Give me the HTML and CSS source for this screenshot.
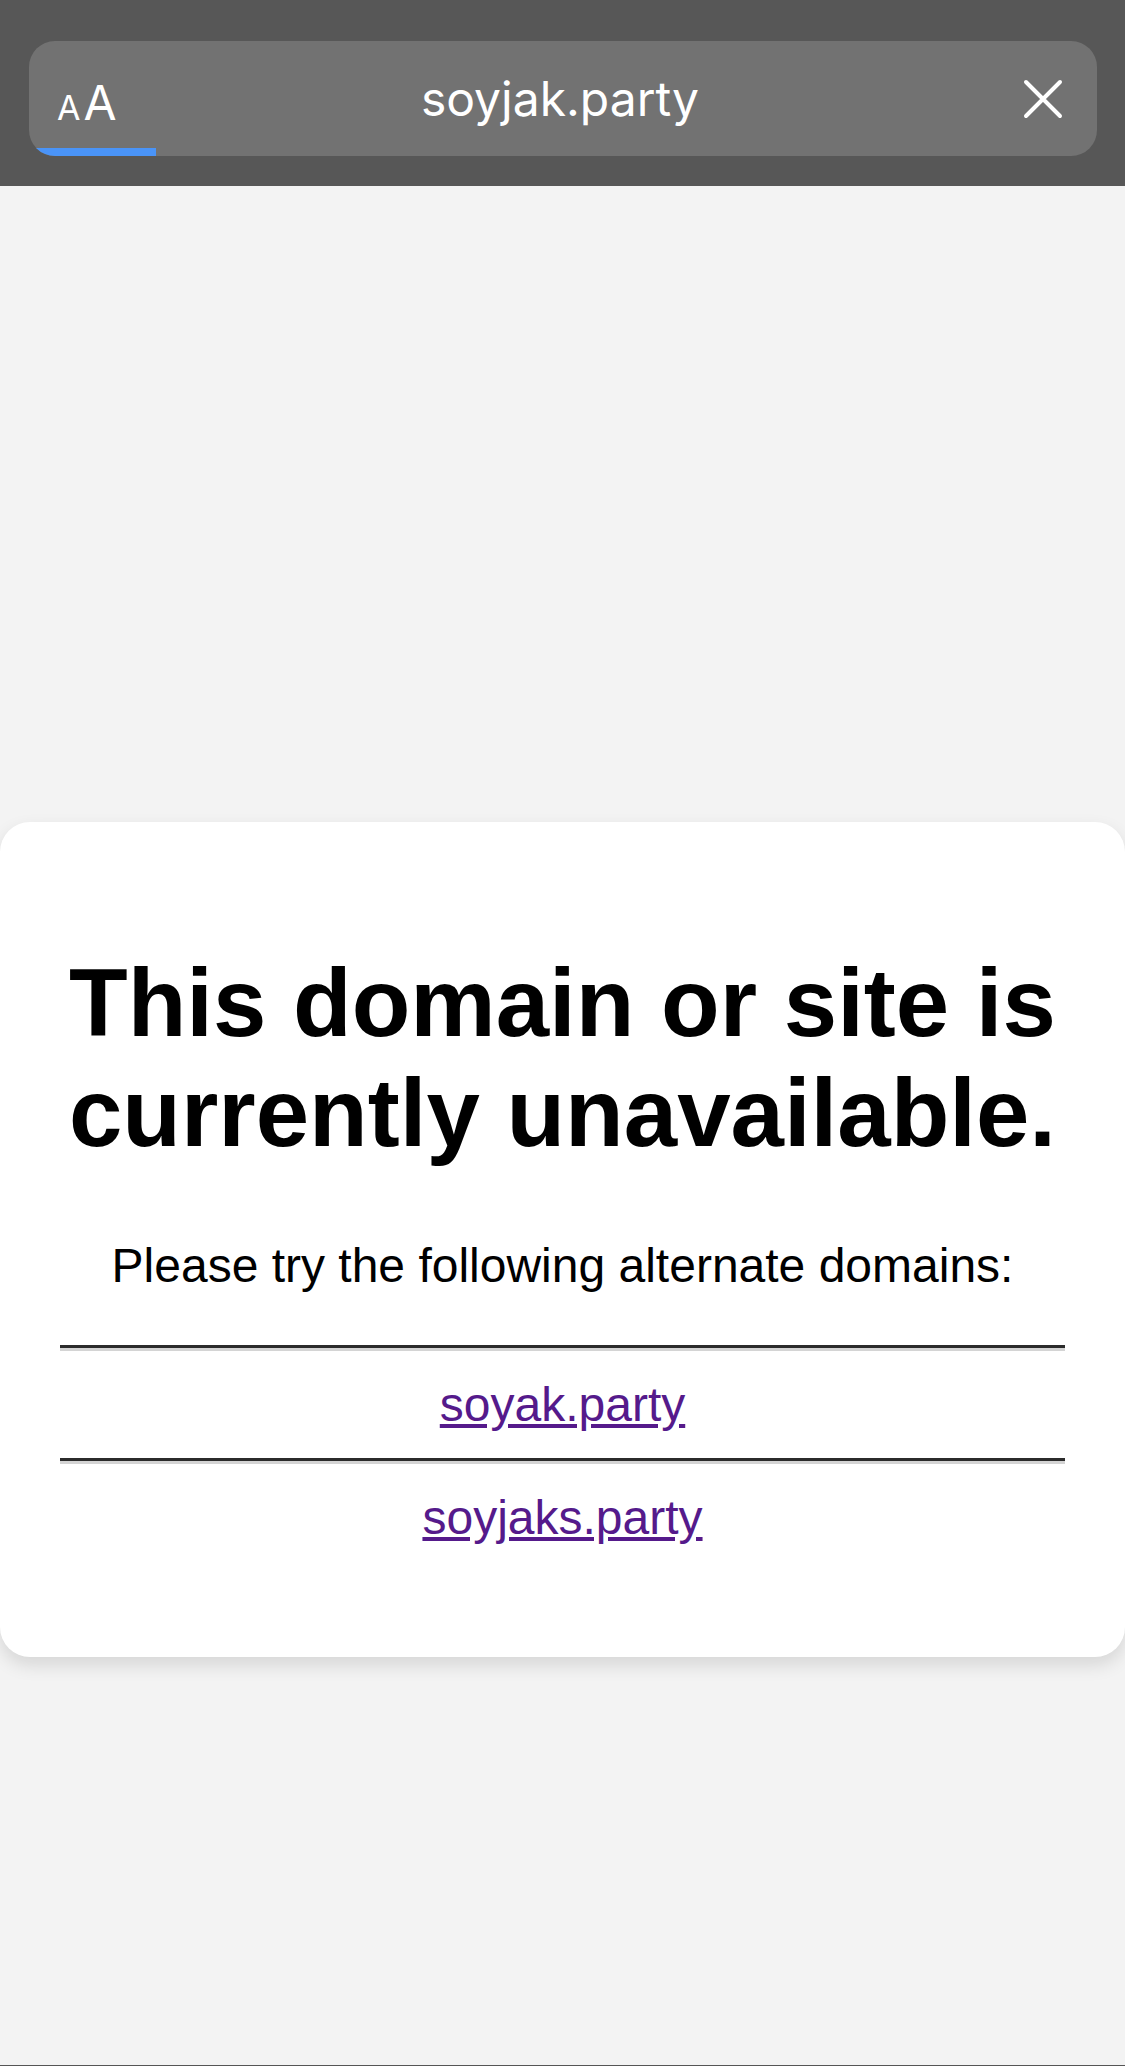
FILE: index.html
```html
<!DOCTYPE html>
<html lang="en">
  <head>
    <meta charset="UTF-8" />
    <meta name="viewport" content="width=device-width, initial-scale=1.0" />
    <title>soyjak.party</title>
    <link rel="stylesheet" href="styles.css">
  </head>
  <body>
    <header class="topbar">
      <div class="urlbar">
        <span class="aa"><span class="small-a">A</span><span class="big-a">A</span></span>
        <span class="url">soyjak.party</span>
        <svg class="close" width="40" height="40" viewBox="0 0 40 40">
          <path d="M3 3 L37 37 M37 3 L3 37" stroke="#fff" stroke-width="4" stroke-linecap="round" fill="none" />
        </svg>
        <div class="progress"></div>
      </div>
    </header>

    <main class="page">
      <div class="card">
        <h1>This domain or site is currently unavailable.</h1>
        <p class="lead">Please try the following alternate domains:</p>
        <hr />
        <div class="alt"><a href="#">soyak.party</a></div>
        <hr />
        <div class="alt"><a href="#">soyjaks.party</a></div>
      </div>
    </main>
  </body>
</html>
```

FILE: styles.css
```css
html,
body {
  margin: 0;
  padding: 0;
}

body {
  background-color: #f3f3f3;
  font-family: "Liberation Sans", Arial, sans-serif;
  min-height: 2065px;
  border-bottom: 1px solid #555555;
}

/* browser chrome */
.topbar {
  background-color: #575757;
  height: 186px;
  box-sizing: border-box;
  padding: 41px 28px 0 29px;
}

.urlbar {
  position: relative;
  height: 115px;
  background-color: #727272;
  border-radius: 26px;
  overflow: hidden;
  display: grid;
  grid-template-columns: 1fr auto 1fr;
  align-items: center;
  padding: 0 34px 0 28px;
  color: #ffffff;
  font-family: Inter, "Noto Sans", sans-serif;
}

.aa {
  justify-self: start;
  display: flex;
  align-items: baseline;
  gap: 3px;
  padding-top: 8px;
}

.small-a {
  font-size: 34px;
}

.big-a {
  font-size: 48px;
}

.url {
  font-size: 48px;
  padding-bottom: 1px;
}

.close {
  justify-self: end;
}

.progress {
  position: absolute;
  left: 0;
  bottom: 0;
  width: 127px;
  height: 8px;
  background-color: #4a94f8;
}

/* page */
.page {
  padding-top: 636px;
}

.card {
  background-color: #ffffff;
  border-radius: 30px;
  box-shadow: 0 8px 18px rgba(0, 0, 0, 0.12);
  padding: 126px 60px 112px;
  text-align: center;
  color: #000000;
}

h1 {
  font-size: 96px;
  font-weight: bold;
  margin: 0;
}

.lead {
  font-size: 48px;
  margin: 70px 0 52px;
}

hr {
  margin: 26px 0;
  height: 0;
  border: none;
  border-top: 3px solid #2b2b2b;
  border-bottom: 3px solid #d4d4d4;
}

.alt {
  font-size: 48px;
}

.alt a {
  color: #551a8b;
}
```
